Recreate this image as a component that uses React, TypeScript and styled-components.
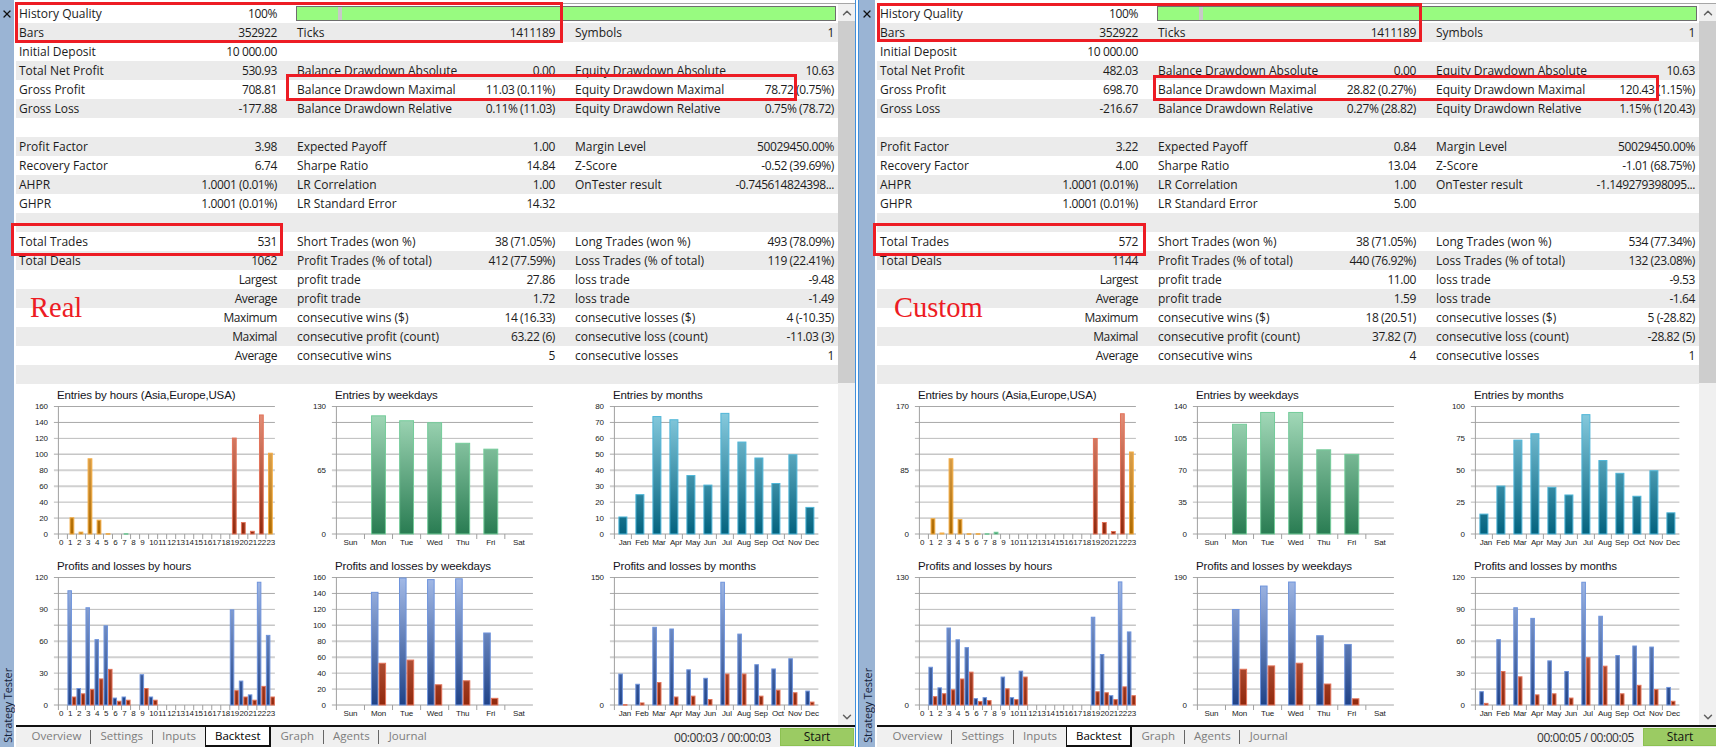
import React from "react";
import styled, { createGlobalStyle } from "styled-components";
import { ChevronDown, ChevronUp, X } from "lucide-react";

const GlobalStyle = createGlobalStyle`
	html, body {
		margin: 0;
		padding: 0;
		background: #fff;
		overflow: hidden;
	}
`;

const Page = styled.div`
	display: flex;
	width: 1716px;
	height: 747px;
	font-family: "Open Sans", "Liberation Sans", sans-serif;
	font-size: 12px;
	color: #1c1c1c;
	overflow: hidden;
`;

const Panel = styled.section<{ $width: number }>`
	position: relative;
	display: flex;
	flex: none;
	width: ${(p) => p.$width}px;
	height: 747px;
`;

const Divider = styled.div`
	flex: none;
	width: 2px;
	border-left: 1px solid #3f8fdc;
	border-right: 1px solid #3f8fdc;
`;

const Rail = styled.div<{ $width: number }>`
	display: flex;
	flex: none;
	flex-direction: column;
	align-items: center;
	justify-content: space-between;
	width: ${(p) => p.$width}px;
	margin-right: 2px;
	padding: 8px 0 4px;
	box-sizing: border-box;
	background: #9ab4d4;
`;

const RailTitle = styled.span`
	writing-mode: vertical-rl;
	transform: rotate(180deg);
	font-size: 11px;
	line-height: 13px;
	letter-spacing: -0.15px;
	color: #16233a;
`;

const Main = styled.div`
	display: flex;
	flex: 1;
	flex-direction: column;
	min-width: 0;
	padding-top: 3px;
`;

const Body = styled.div`
	display: flex;
	flex: none;
	height: 722px;
	border-top: 1px solid #a6a6a6;
	box-sizing: border-box;
`;

const Content = styled.div`
	flex: none;
	width: 822px;
`;

const Row = styled.div`
	display: grid;
	grid-template-columns: 278px 278px 266px;
	height: 19px;
	line-height: 19px;

	&:nth-child(even) {
		background: #ebebeb;
	}
`;

const Cell = styled.div`
	display: flex;
	justify-content: space-between;
	padding: 0 17px 0 3px;
	white-space: nowrap;

	&:nth-child(3) {
		padding-right: 4px;
	}
`;

const Value = styled.span`
	letter-spacing: -0.4px;
`;

const QualityTrack = styled.div`
	grid-column: 2 / 4;
	position: relative;
	height: 15px;
	margin: 2px 2px 0;
	box-sizing: border-box;
	border: 1px solid #6e6e6e;
	background: #98fb80;
`;

const QualityMark = styled.div`
	position: absolute;
	top: 0;
	bottom: 0;
	left: 41px;
	width: 4px;
	background: #c8c8c8;
`;

const ChartGrid = styled.div`
	display: grid;
	grid-template-columns: 278px 278px 266px;
	grid-auto-rows: 170.5px;
`;

const ChartBox = styled.div`
	display: flex;
	flex-direction: column;
`;

const ChartTitle = styled.div`
	height: 22px;
	padding-left: 41px;
	font-family: "Liberation Sans", Arial, sans-serif;
	font-size: 11.5px;
	line-height: 22px;
	letter-spacing: -0.15px;
	color: #14141c;
`;

const Plot = styled.svg`
	display: block;
	overflow: visible;
`;

const Tick = styled.text`
	font-family: "Liberation Sans", Arial, sans-serif;
	font-size: 8px;
	letter-spacing: -0.15px;
	fill: #222;
`;

const Scroll = styled.div`
	display: flex;
	flex: none;
	flex-direction: column;
	align-items: center;
	justify-content: space-between;
	width: 17px;
	background: #f0f0f0;
	color: #606060;
`;

const ScrollEnd = styled.div`
	display: flex;
	flex: none;
	align-items: center;
	justify-content: center;
	width: 17px;
	height: 17px;
`;

const ScrollThumb = styled.div`
	flex: none;
	width: 17px;
	height: 362px;
	background: #cdcdcd;
`;

const ScrollRest = styled.div`
	flex: 1;
`;

const TabBar = styled.div`
	display: flex;
	flex: 1;
	align-items: flex-start;
	padding-left: 6px;
	background: #f0f0f0;
	border-top: 2px solid #111;
	font-size: 11.5px;
`;

const Tab = styled.div<{ $active?: boolean; $sep?: boolean }>`
	position: relative;
	box-sizing: border-box;
	height: 20px;
	padding: 0 ${(p) => (p.$active ? "8.5px" : "9.5px")};
	line-height: 18px;
	color: ${(p) => (p.$active ? "#000" : "#7d7d7d")};
	background: ${(p) => (p.$active ? "#fff" : "transparent")};
	border-left: ${(p) => (p.$active ? "1px solid #111" : "none")};
	border-right: ${(p) => (p.$active ? "2px solid #111" : "none")};
	border-bottom: ${(p) => (p.$active ? "2px solid #111" : "none")};

	${(p) =>
		p.$sep &&
		`
		&::after {
			content: "";
			position: absolute;
			right: 0;
			top: 3px;
			height: 14px;
			border-right: 1px solid #666;
		}
	`}
`;

const Timer = styled.div`
	margin-left: auto;
	padding-right: 9px;
	line-height: 21px;
	font-size: 12px;
	letter-spacing: -0.45px;
	color: #333;
`;

const StartButton = styled.div`
	flex: none;
	box-sizing: border-box;
	width: 74px;
	height: 18px;
	margin: 1px 1px 0 0;
	background: #9bcb63;
	border: 1px solid #8cc152;
	text-align: center;
	line-height: 16px;
	font-size: 12px;
	color: #111;
`;

const RedBox = styled.div<{ $x: number; $y: number; $w: number; $h: number }>`
	position: absolute;
	left: ${(p) => p.$x}px;
	top: ${(p) => p.$y}px;
	width: ${(p) => p.$w}px;
	height: ${(p) => p.$h}px;
	box-sizing: border-box;
	border: 3px solid #ed1c24;
	pointer-events: none;
`;

const Caption = styled.div<{ $x: number }>`
	position: absolute;
	left: ${(p) => p.$x}px;
	top: 291px;
	font-family: "Liberation Serif", "Times New Roman", serif;
	font-size: 28.5px;
	line-height: 34px;
	color: #ed1c24;
`;

const PLOT_LEFT = 42.4;
const PLOT_H = 127.5;
const BOTTOM = PLOT_H + 0.5;

const gridStyles: [string, number][] = [
	["#a8a8a8", 1],
	["#a8a8a8", 1],
	["#bcbcbc", 1],
	["#c6c6c6", 1.5],
	["#d2d2d2", 2],
	["#d0d0d0", 2],
	["#b8b8b8", 1],
	["#b0b0b0", 1],
	["#a4a4a4", 1],
];

const ramps: Record<string, [string, string, string]> = {
	orange: ["#f2be78", "#ad6a00", "#f4ad45"],
	red: ["#e8957f", "#90280c", "#e2735a"],
	green: ["#a8ddbd", "#297c52", "#74cc9a"],
	teal: ["#8ed0e3", "#03627e", "#4fb6d8"],
	blue: ["#a3bae7", "#1f4287", "#6f94dc"],
};

type Kind = "hours" | "weekdays" | "months";

type ChartSpec = {
	title: string;
	kind: Kind;
	width: number;
	scale: number;
	yLabels: number[];
	values?: number[];
	colorOf?: (i: number) => string;
	profit?: number[];
	loss?: number[];
};

const HOURS = Array.from({ length: 24 }, (_, i) => String(i));
const DAYS = ["Sun", "Mon", "Tue", "Wed", "Thu", "Fri", "Sat"];
const MONTHS = ["Jan", "Feb", "Mar", "Apr", "May", "Jun", "Jul", "Aug", "Sep", "Oct", "Nov", "Dec"];
const categories = { hours: HOURS, weekdays: DAYS, months: MONTHS };

function Chart({ spec, id }: { spec: ChartSpec; id: string }) {
	const cats = categories[spec.kind];
	const catW = spec.width / cats.length;
	const right = PLOT_LEFT + spec.width;
	const yOf = (v: number) => BOTTOM - (v / spec.scale) * PLOT_H;

	const bar = (key: string, x: number, w: number, v: number, color: string) => {
		if (!v) return null;
		const y = yOf(v);
		return (
			<rect
				key={key}
				x={x + 0.5}
				y={y + 0.5}
				width={Math.max(w - 1, 0.5)}
				height={Math.max(BOTTOM - y - 0.5, 0.5)}
				fill={`url(#${id}-${color})`}
				stroke={ramps[color][2]}
				strokeWidth={1}
			/>
		);
	};

	return (
		<ChartBox>
			<ChartTitle>{spec.title}</ChartTitle>
			<Plot width={278} height={148}>
				<defs>
					{Object.entries(ramps).map(([name, [top, bottom]]) => (
						<linearGradient
							key={name}
							id={`${id}-${name}`}
							gradientUnits="userSpaceOnUse"
							x1="0"
							y1="0"
							x2="0"
							y2={BOTTOM}
						>
							<stop offset="0" stopColor={top} />
							<stop offset="1" stopColor={bottom} />
						</linearGradient>
					))}
				</defs>
				{gridStyles.map(([color, weight], i) => {
					const y = 0.5 + (i * PLOT_H) / 8;
					return (
						<line
							key={i}
							x1={PLOT_LEFT - 4.5}
							x2={right}
							y1={y}
							y2={y}
							stroke={color}
							strokeWidth={weight}
						/>
					);
				})}
				<line x1={PLOT_LEFT} x2={PLOT_LEFT} y1={0} y2={BOTTOM + 5} stroke="#a0a0a0" />
				{cats.map((_, i) =>
					i === 0 ? null : (
						<line
							key={i}
							x1={PLOT_LEFT + i * catW}
							x2={PLOT_LEFT + i * catW}
							y1={BOTTOM}
							y2={BOTTOM + 5}
							stroke="#a0a0a0"
						/>
					),
				)}
				{spec.values?.map((v, i) => {
					const w = catW * 0.53;
					const x = PLOT_LEFT + i * catW + (catW - w) / 2;
					return bar(`v${i}`, x, w, v, spec.colorOf ? spec.colorOf(i) : "green");
				})}
				{spec.profit?.map((v, i) => {
					const w = spec.kind === "hours" ? catW / 2 : catW * 0.27;
					const mid = PLOT_LEFT + i * catW + catW / 2;
					return (
						<React.Fragment key={i}>
							{bar(`p${i}`, mid - w, w, v, "blue")}
							{bar(`l${i}`, mid, w, spec.loss?.[i] ?? 0, "red")}
						</React.Fragment>
					);
				})}
				{spec.yLabels.map((v) => (
					<Tick key={v} x={PLOT_LEFT - 10.5} y={yOf(v) + 2.5} textAnchor="end">
						{v}
					</Tick>
				))}
				{cats.map((label, i) =>
					spec.kind === "hours" ? (
						<Tick key={label} x={PLOT_LEFT + i * catW + 0.6} y={BOTTOM + 11}>
							{label}
						</Tick>
					) : (
						<Tick
							key={label}
							x={PLOT_LEFT + i * catW + catW / 2 + (spec.kind === "months" ? 2 : 0)}
							y={BOTTOM + 11}
							textAnchor="middle"
						>
							{label}
						</Tick>
					),
				)}
			</Plot>
		</ChartBox>
	);
}

type Stats = string[][];

const realStats: Stats = [
	["Bars", "352922", "Ticks", "1411189", "Symbols", "1"],
	["Initial Deposit", "10 000.00", "", "", "", ""],
	["Total Net Profit", "530.93", "Balance Drawdown Absolute", "0.00", "Equity Drawdown Absolute", "10.63"],
	["Gross Profit", "708.81", "Balance Drawdown Maximal", "11.03 (0.11%)", "Equity Drawdown Maximal", "78.72 (0.75%)"],
	["Gross Loss", "-177.88", "Balance Drawdown Relative", "0.11% (11.03)", "Equity Drawdown Relative", "0.75% (78.72)"],
	["", "", "", "", "", ""],
	["Profit Factor", "3.98", "Expected Payoff", "1.00", "Margin Level", "50029450.00%"],
	["Recovery Factor", "6.74", "Sharpe Ratio", "14.84", "Z-Score", "-0.52 (39.69%)"],
	["AHPR", "1.0001 (0.01%)", "LR Correlation", "1.00", "OnTester result", "-0.745614824398..."],
	["GHPR", "1.0001 (0.01%)", "LR Standard Error", "14.32", "", ""],
	["", "", "", "", "", ""],
	["Total Trades", "531", "Short Trades (won %)", "38 (71.05%)", "Long Trades (won %)", "493 (78.09%)"],
	["Total Deals", "1062", "Profit Trades (% of total)", "412 (77.59%)", "Loss Trades (% of total)", "119 (22.41%)"],
	["", "Largest", "profit trade", "27.86", "loss trade", "-9.48"],
	["", "Average", "profit trade", "1.72", "loss trade", "-1.49"],
	["", "Maximum", "consecutive wins ($)", "14 (16.33)", "consecutive losses ($)", "4 (-10.35)"],
	["", "Maximal", "consecutive profit (count)", "63.22 (6)", "consecutive loss (count)", "-11.03 (3)"],
	["", "Average", "consecutive wins", "5", "consecutive losses", "1"],
	["", "", "", "", "", ""],
];

const customStats: Stats = [
	["Bars", "352922", "Ticks", "1411189", "Symbols", "1"],
	["Initial Deposit", "10 000.00", "", "", "", ""],
	["Total Net Profit", "482.03", "Balance Drawdown Absolute", "0.00", "Equity Drawdown Absolute", "10.63"],
	["Gross Profit", "698.70", "Balance Drawdown Maximal", "28.82 (0.27%)", "Equity Drawdown Maximal", "120.43 (1.15%)"],
	["Gross Loss", "-216.67", "Balance Drawdown Relative", "0.27% (28.82)", "Equity Drawdown Relative", "1.15% (120.43)"],
	["", "", "", "", "", ""],
	["Profit Factor", "3.22", "Expected Payoff", "0.84", "Margin Level", "50029450.00%"],
	["Recovery Factor", "4.00", "Sharpe Ratio", "13.04", "Z-Score", "-1.01 (68.75%)"],
	["AHPR", "1.0001 (0.01%)", "LR Correlation", "1.00", "OnTester result", "-1.149279398095..."],
	["GHPR", "1.0001 (0.01%)", "LR Standard Error", "5.00", "", ""],
	["", "", "", "", "", ""],
	["Total Trades", "572", "Short Trades (won %)", "38 (71.05%)", "Long Trades (won %)", "534 (77.34%)"],
	["Total Deals", "1144", "Profit Trades (% of total)", "440 (76.92%)", "Loss Trades (% of total)", "132 (23.08%)"],
	["", "Largest", "profit trade", "11.00", "loss trade", "-9.53"],
	["", "Average", "profit trade", "1.59", "loss trade", "-1.64"],
	["", "Maximum", "consecutive wins ($)", "18 (20.51)", "consecutive losses ($)", "5 (-28.82)"],
	["", "Maximal", "consecutive profit (count)", "37.82 (7)", "consecutive loss (count)", "-28.82 (5)"],
	["", "Average", "consecutive wins", "4", "consecutive losses", "1"],
	["", "", "", "", "", ""],
];

const hourColor = (greens: number[]) => (i: number) => {
	if (greens.includes(i)) return "green";
	if (i >= 19 && i <= 22) return "red";
	return "orange";
};

const realCharts: ChartSpec[] = [
	{
		title: "Entries by hours (Asia,Europe,USA)",
		kind: "hours",
		width: 216.5,
		scale: 160,
		yLabels: [160, 140, 120, 100, 80, 60, 40, 20, 0],
		values: [0, 21, 3, 95, 18, 1, 0, 1, 0, 0, 0, 0, 0, 0, 0, 0, 0, 0, 0, 121, 15, 4, 150, 102],
		colorOf: hourColor([7]),
	},
	{
		title: "Entries by weekdays",
		kind: "weekdays",
		width: 196.5,
		scale: 130,
		yLabels: [130, 65, 0],
		values: [0, 121, 116, 114, 93, 87, 0],
		colorOf: () => "green",
	},
	{
		title: "Entries by months",
		kind: "months",
		width: 204,
		scale: 80,
		yLabels: [80, 70, 60, 50, 40, 30, 20, 10, 0],
		values: [11, 25, 74, 72, 37, 31, 76, 58, 48, 32, 50, 17],
		colorOf: () => "teal",
	},
	{
		title: "Profits and losses by hours",
		kind: "hours",
		width: 216.5,
		scale: 120,
		yLabels: [120, 90, 60, 30, 0],
		profit: [0, 108, 16, 92, 62, 75, 7, 8, 0, 29, 8, 0, 0, 0, 0, 0, 0, 0, 0, 90, 23, 10, 116, 66],
		loss: [0, 8, 11, 15, 25, 34, 4, 5, 0, 16, 5, 0, 0, 0, 0, 0, 0, 0, 0, 14, 8, 5, 18, 8],
	},
	{
		title: "Profits and losses by weekdays",
		kind: "weekdays",
		width: 196.5,
		scale: 160,
		yLabels: [160, 140, 120, 100, 80, 60, 40, 20, 0],
		profit: [0, 142, 160, 158, 159, 91, 0],
		loss: [0, 53, 57, 26, 31, 9, 0],
	},
	{
		title: "Profits and losses by months",
		kind: "months",
		width: 204,
		scale: 150,
		yLabels: [150, 0],
		profit: [37, 25, 92, 90, 42, 32, 145, 84, 48, 43, 55, 17],
		loss: [1, 3, 27, 10, 11, 7, 37, 37, 11, 18, 15, 4],
	},
];

const customCharts: ChartSpec[] = [
	{
		title: "Entries by hours (Asia,Europe,USA)",
		kind: "hours",
		width: 216.5,
		scale: 170,
		yLabels: [170, 85, 0],
		values: [0, 21, 2, 101, 20, 1, 1, 1, 3, 0, 0, 0, 0, 0, 0, 0, 0, 0, 0, 128, 16, 4, 161, 110],
		colorOf: hourColor([7, 8]),
	},
	{
		title: "Entries by weekdays",
		kind: "weekdays",
		width: 196.5,
		scale: 140,
		yLabels: [140, 105, 70, 35, 0],
		values: [0, 121, 134, 134, 93, 88, 0],
		colorOf: () => "green",
	},
	{
		title: "Entries by months",
		kind: "months",
		width: 204,
		scale: 100,
		yLabels: [100, 75, 50, 25, 0],
		values: [16, 38, 74, 79, 37, 31, 94, 58, 48, 30, 50, 17],
		colorOf: () => "teal",
	},
	{
		title: "Profits and losses by hours",
		kind: "hours",
		width: 216.5,
		scale: 130,
		yLabels: [130, 0],
		profit: [0, 39, 18, 79, 67, 59, 7, 8, 0, 29, 8, 35, 0, 0, 0, 0, 0, 0, 0, 90, 52, 10, 126, 75],
		loss: [0, 9, 12, 16, 27, 34, 4, 5, 0, 17, 6, 29, 0, 0, 0, 0, 0, 0, 0, 14, 13, 6, 19, 10],
	},
	{
		title: "Profits and losses by weekdays",
		kind: "weekdays",
		width: 196.5,
		scale: 190,
		yLabels: [190, 0],
		profit: [0, 143, 178, 184, 104, 91, 0],
		loss: [0, 54, 59, 63, 32, 10, 0],
	},
	{
		title: "Profits and losses by months",
		kind: "months",
		width: 204,
		scale: 120,
		yLabels: [120, 90, 60, 30, 0],
		profit: [13, 62, 92, 82, 42, 32, 116, 84, 47, 56, 55, 17],
		loss: [2, 32, 27, 10, 11, 7, 45, 37, 11, 19, 15, 4],
	},
];

type Box = [number, number, number, number];

type TesterProps = {
	name: string;
	width: number;
	railWidth: number;
	stats: Stats;
	charts: ChartSpec[];
	caption: string;
	captionX: number;
	boxes: Box[];
	time: string;
};

function Tester({ name, width, railWidth, stats, charts, caption, captionX, boxes, time }: TesterProps) {
	return (
		<Panel $width={width}>
			<Rail $width={railWidth}>
				<X size={12} strokeWidth={2.6} color="#111" />
				<RailTitle>Strategy Tester</RailTitle>
			</Rail>
			<Main>
				<Body>
					<Content>
						<Row>
							<Cell>
								<span>History Quality</span>
								<Value>100%</Value>
							</Cell>
							<QualityTrack>
								<QualityMark />
							</QualityTrack>
						</Row>
						{stats.map((r, i) => (
							<Row key={i}>
								<Cell>
									<span>{r[0]}</span>
									<Value>{r[1]}</Value>
								</Cell>
								<Cell>
									<span>{r[2]}</span>
									<Value>{r[3]}</Value>
								</Cell>
								<Cell>
									<span>{r[4]}</span>
									<Value>{r[5]}</Value>
								</Cell>
							</Row>
						))}
						<ChartGrid>
							{charts.map((c, i) => (
								<Chart key={c.title} spec={c} id={`${name}-${i}`} />
							))}
						</ChartGrid>
					</Content>
					<Scroll>
						<ScrollEnd>
							<ChevronUp size={14} strokeWidth={2.5} />
						</ScrollEnd>
						<ScrollThumb />
						<ScrollRest />
						<ScrollEnd>
							<ChevronDown size={14} strokeWidth={2.5} />
						</ScrollEnd>
					</Scroll>
				</Body>
				<TabBar>
					<Tab $sep>Overview</Tab>
					<Tab $sep>Settings</Tab>
					<Tab>Inputs</Tab>
					<Tab $active>Backtest</Tab>
					<Tab $sep>Graph</Tab>
					<Tab $sep>Agents</Tab>
					<Tab>Journal</Tab>
					<Timer>{time}</Timer>
					<StartButton>Start</StartButton>
				</TabBar>
			</Main>
			{boxes.map(([x, y, w, h]) => (
				<RedBox key={`${x}-${y}`} $x={x} $y={y} $w={w} $h={h} />
			))}
			<Caption $x={captionX}>{caption}</Caption>
		</Panel>
	);
}

export default function App() {
	return (
		<Page>
			<GlobalStyle />
			<Tester
				name="real"
				width={855}
				railWidth={14}
				stats={realStats}
				charts={realCharts}
				caption="Real"
				captionX={30}
				boxes={[
					[15, 2, 548, 41],
					[286, 74, 511, 27],
					[11, 223, 272, 33],
				]}
				time="00:00:03 / 00:00:03"
			/>
			<Divider />
			<Tester
				name="custom"
				width={859}
				railWidth={16}
				stats={customStats}
				charts={customCharts}
				caption="Custom"
				captionX={35}
				boxes={[
					[18, 3, 545, 39],
					[294, 75, 506, 26],
					[14, 223, 273, 33],
				]}
				time="00:00:05 / 00:00:05"
			/>
		</Page>
	);
}
